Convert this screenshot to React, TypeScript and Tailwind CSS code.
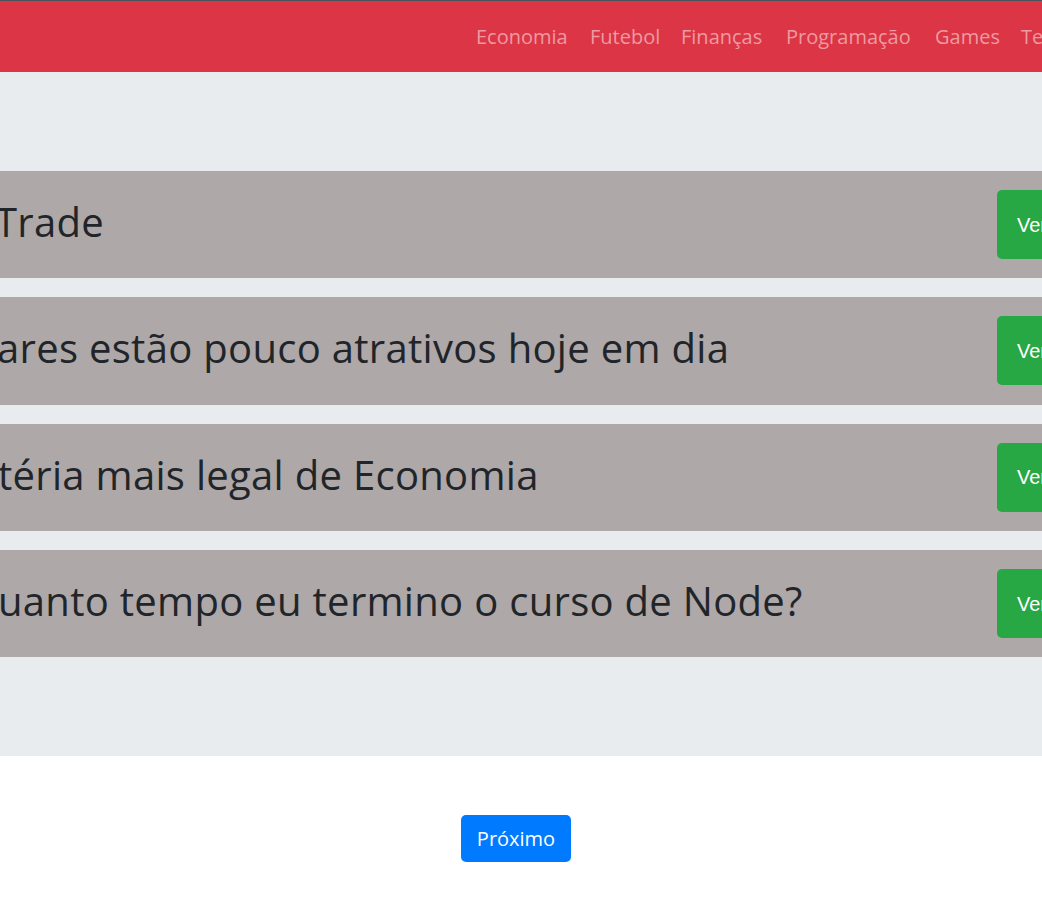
import React from "react";

const links = [
  { t: "Economia", w: "w-[114px]" },
  { t: "Futebol", w: "w-[91px]" },
  { t: "Finanças", w: "w-[105px]" },
  { t: "Programação", w: "w-[149px]" },
  { t: "Games", w: "w-[86px]" },
  { t: "Tecnologia", w: "w-[120px]" },
];

const cards = [
  { t: "Trade", ml: "ml-[-5px]" },
  { t: "ares estão pouco atrativos hoje em dia", ml: "ml-[-3px]" },
  { t: "téria mais legal de Economia", ml: "ml-[-2px]" },
  { t: "uanto tempo eu termino o curso de Node?", ml: "ml-[-2px]" },
];

export default function App() {
  return (
    <div
      className="w-[1042px] h-[897px] overflow-hidden bg-white text-[#212529]"
      style={{ fontFamily: '"Open Sans", "Noto Sans", sans-serif' }}
    >
      <div className="border-t border-[#4b5259]" />
      <nav className="h-[71px] bg-[#dc3545] flex items-center pl-[476px] whitespace-nowrap">
        {links.map((l) => (
          <span key={l.t} className={`${l.w} shrink-0 text-[20px] text-[#ee9aa2] leading-none`}>
            {l.t}
          </span>
        ))}
      </nav>
      <section className="bg-[#e9ecef] pt-[99px] pb-[99px] flex flex-col gap-[19px]">
        {cards.map((c) => (
          <div key={c.t} className="h-[107.33px] bg-[#aea8a8] flex items-center justify-between whitespace-nowrap overflow-hidden">
            <h1 className={`${c.ml} text-[40px] leading-[48px] font-normal tracking-[0.3px] pb-[5px]`}>{c.t}</h1>
            <button
              className="shrink-0 w-[120px] h-[69px] mr-[-75px] bg-[#28a745] rounded-[5px] text-white text-[20px] text-left pl-[20px]"
              style={{ fontFamily: '"Liberation Sans", Arial, sans-serif' }}
            >
              Ver mais
            </button>
          </div>
        ))}
      </section>
      <div className="flex justify-center pt-[59px] mr-[10px]">
        <button className="w-[110px] h-[47px] bg-[#007bff] rounded-[5px] text-white text-[20px] leading-none">
          Próximo
        </button>
      </div>
    </div>
  );
}
